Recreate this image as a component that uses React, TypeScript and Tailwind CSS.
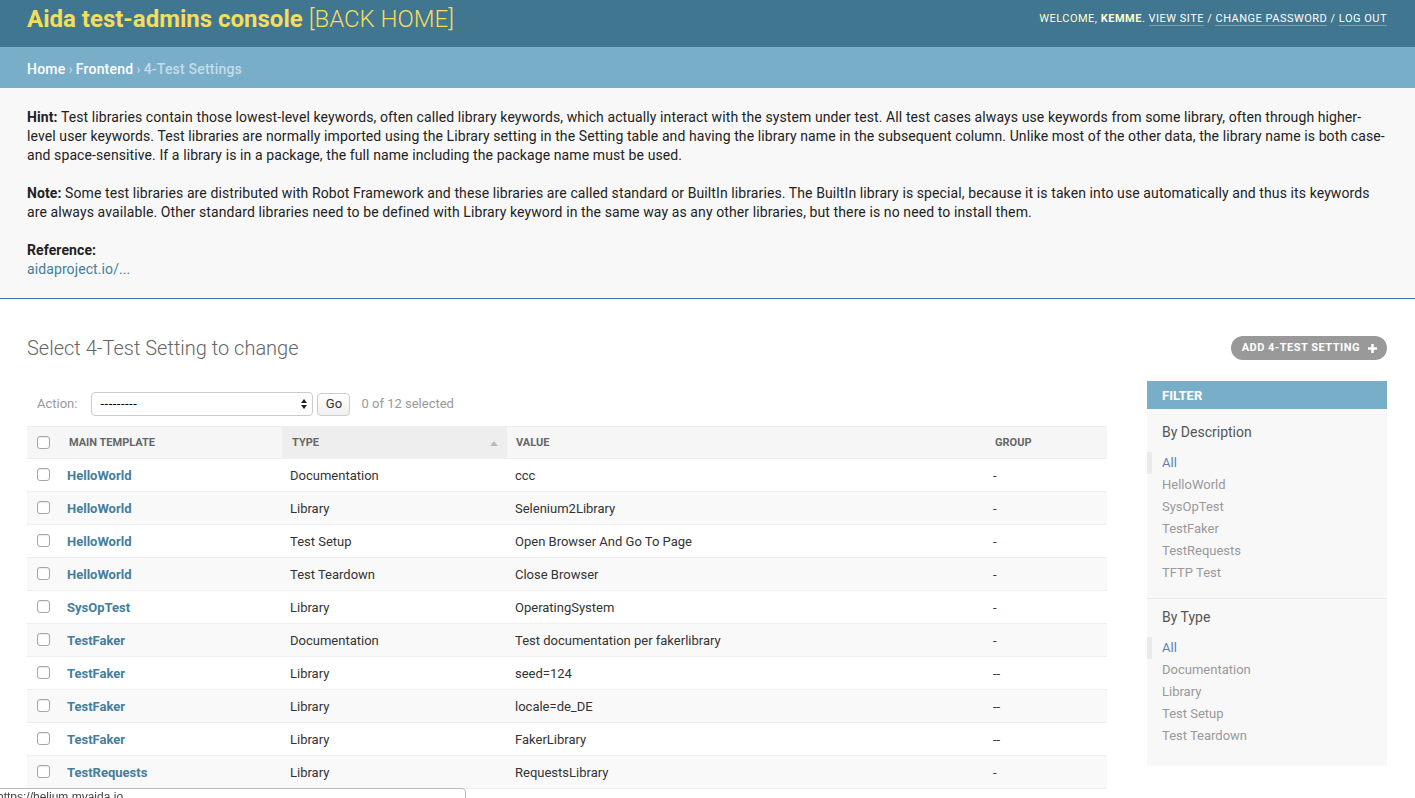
import React from "react";

const rows = [
  { tpl: "HelloWorld", type: "Documentation", value: "ccc", group: "-" },
  { tpl: "HelloWorld", type: "Library", value: "Selenium2Library", group: "-" },
  { tpl: "HelloWorld", type: "Test Setup", value: "Open Browser And Go To Page", group: "-" },
  { tpl: "HelloWorld", type: "Test Teardown", value: "Close Browser", group: "-" },
  { tpl: "SysOpTest", type: "Library", value: "OperatingSystem", group: "-" },
  { tpl: "TestFaker", type: "Documentation", value: "Test documentation per fakerlibrary", group: "-" },
  { tpl: "TestFaker", type: "Library", value: "seed=124", group: "--" },
  { tpl: "TestFaker", type: "Library", value: "locale=de_DE", group: "--" },
  { tpl: "TestFaker", type: "Library", value: "FakerLibrary", group: "--" },
  { tpl: "TestRequests", type: "Library", value: "RequestsLibrary", group: "-" },
];

const descFilters = ["All", "HelloWorld", "SysOpTest", "TestFaker", "TestRequests", "TFTP Test"];
const typeFilters = ["All", "Documentation", "Library", "Test Setup", "Test Teardown"];

function Checkbox() {
  return <span className="block w-[13px] h-[13px] rounded-[3px] border border-[#a6a6a6] bg-white shadow-[inset_0_1px_1px_rgba(0,0,0,0.08)]" />;
}

function FilterGroup({ title, items, last }: { title: string; items: string[]; last?: boolean }) {
  return (
    <div className={last ? "pb-[19px]" : "pb-[14px] border-b border-[#eaeaea]"}>
      <h3 className={`${last ? "mt-[8px]" : "mt-[13px]"} mb-[10px] px-[15px] text-[14px] leading-[20px] text-[#555]`}>{title}</h3>
      <ul>
        {items.map((it, i) => (
          <li
            key={it}
            className={`text-[13px] leading-[22px] ${i === 0 ? "border-l-[5px] border-[#eaeaea] pl-[10px] text-[#5b80b2]" : "pl-[15px] text-[#999]"}`}
          >
            {it}
          </li>
        ))}
      </ul>
    </div>
  );
}

export default function App() {
  return (
    <div className="min-h-screen bg-white text-[#333] font-['Roboto','Liberation_Sans',sans-serif]">
      {/* header */}
      <div className="h-[47px] bg-[#417690] pl-[27px] pr-[28px] flex justify-between items-start">
        <div className="pt-[6px] text-[24px] leading-[26px] text-[#f5dd5d]">
          <span className="font-bold">Aida test-admins console</span> <span className="font-light">[BACK HOME]</span>
        </div>
        <div className="pt-[12px] text-[11px] leading-[14px] uppercase tracking-[0.5px] text-[#ffc]">
          Welcome, <strong className="font-bold">kemme</strong>.{" "}
          <a className="text-white border-b border-white/30">View site</a> /{" "}
          <a className="text-white border-b border-white/30">Change password</a> /{" "}
          <a className="text-white border-b border-white/30">Log out</a>
        </div>
      </div>

      {/* breadcrumbs */}
      <div className="h-[41px] bg-[#79aec8] px-[27px] pt-[3px] flex items-center text-[14px] tracking-[0.2px] text-[#c4dce8]">
        <a className="text-white font-medium">Home</a>
        <span className="mx-[3px]">›</span>
        <a className="text-white font-medium">Frontend</a>
        <span className="mx-[3px]">›</span>
        <span className="font-medium">4-Test Settings</span>
      </div>

      {/* hint */}
      <div className="bg-[#f8f8f8] border-b border-[#417690] pl-[27px] pr-[27px] pt-[20px] pb-[19px] text-[14px] leading-[19px] tracking-[0.1px] text-[#222]">
        <p>
          <strong className="font-bold">Hint:</strong> Test libraries contain those lowest-level keywords, often called library keywords, which actually interact with the system under test. All test cases always use keywords from some library, often through higher-level user keywords. Test libraries are normally imported using the Library setting in the Setting table and having the library name in the subsequent column. Unlike most of the other data, the library name is both case- and space-sensitive. If a library is in a package, the full name including the package name must be used.
        </p>
        <p className="mt-[19px]">
          <strong className="font-bold">Note:</strong> Some test libraries are distributed with Robot Framework and these libraries are called standard or BuiltIn libraries. The BuiltIn library is special, because it is taken into use automatically and thus its keywords are always available. Other standard libraries need to be defined with Library keyword in the same way as any other libraries, but there is no need to install them.
        </p>
        <p className="mt-[19px]">
          <strong className="font-bold">Reference:</strong>
          <br />
          <a className="text-[#447e9b]">aidaproject.io/...</a>
        </p>
      </div>

      {/* content */}
      <div className="pl-[27px] pr-[28px] pt-[37px]">
        <div className="flex items-center justify-between">
          <h1 className="text-[20px] leading-[24px] font-light text-[#666]">Select 4-Test Setting to change</h1>
          <a className="h-[24px] rounded-full bg-[#999] pl-[11px] pr-[9px] flex items-center gap-[7px] text-[11px] font-bold uppercase tracking-[0.5px] text-white">
            Add 4-Test Setting
            <svg width="11" height="11" viewBox="0 0 11 11">
              <path d="M5.5 1v9M1 5.5h9" stroke="white" strokeWidth="2.6" />
            </svg>
          </a>
        </div>

        <div className="mt-[21px] flex gap-[40px] items-start">
          {/* changelist */}
          <div className="flex-1">
            <div className="pt-[11px] pb-[10px] pl-[10px] flex items-center h-[45px] text-[13px]">
              <span className="text-[#999]">Action:</span>
              <div className="ml-[14px] w-[222px] h-[24px] rounded-[4px] border border-[#ccc] bg-white flex items-center justify-between pl-[8px] pr-[4px] text-black">
                <span className="tracking-[0.5px]">---------</span>
                <svg width="8" height="12" viewBox="0 0 8 12">
                  <path d="M4 1L7 5H1z M4 11L7 7H1z" fill="#222" />
                </svg>
              </div>
              <button className="ml-[4px] w-[33px] h-[23px] rounded-[4px] border border-[#ccc] bg-gradient-to-b from-white to-[#f0f0f0] text-[13px] text-[#333]">Go</button>
              <span className="ml-[11px] text-[#999]">0 of 12 selected</span>
            </div>

            <table className="w-full table-fixed border-collapse text-[13px]">
              <colgroup>
                <col className="w-[32px]" />
                <col className="w-[223px]" />
                <col className="w-[225px]" />
                <col />
                <col className="w-[122px]" />
              </colgroup>
              <thead>
                <tr className="h-[32px] bg-[#f6f6f6] border-y border-[#eee] text-left text-[11px] font-bold uppercase text-[#666]">
                  <th className="pl-[10px]"><Checkbox /></th>
                  <th className="pl-[10px] pt-[2px]">Main template</th>
                  <th className="pl-[10px] pt-[2px] bg-[#eee]">
                    <div className="flex items-center justify-between pr-[9px]">
                      <span>Type</span>
                      <svg width="8" height="5" viewBox="0 0 8 5"><path d="M4 0L8 5H0z" fill="#bbb" /></svg>
                    </div>
                  </th>
                  <th className="pl-[9px] pt-[2px]">Value</th>
                  <th className="pl-[10px] pt-[2px]">Group</th>
                </tr>
              </thead>
              <tbody>
                {rows.map((r, i) => (
                  <tr key={i} className={`h-[33px] border-b border-[#eee] ${i % 2 === 1 ? "bg-[#f9f9f9]" : "bg-white"}`}>
                    <td className="pl-[10px] align-top pt-[9px]"><Checkbox /></td>
                    <td className="pl-[8px] pt-[2px]"><a className="font-bold text-[#447e9b]">{r.tpl}</a></td>
                    <td className="pl-[8px] pt-[2px]">{r.type}</td>
                    <td className="pl-[8px] pt-[2px]">{r.value}</td>
                    <td className="pl-[8px] pt-[2px]">{r.group}</td>
                  </tr>
                ))}
              </tbody>
            </table>
          </div>

          {/* filter */}
          <div className="w-[240px] bg-[#f8f8f8]">
            <h2 className="h-[28px] bg-[#79aec8] px-[15px] pt-[2px] flex items-center text-[13px] font-bold uppercase text-white">Filter</h2>
            <FilterGroup title="By Description" items={descFilters} />
            <FilterGroup title="By Type" items={typeFilters} last />
          </div>
        </div>
      </div>

      {/* browser status bar */}
      <div className="fixed left-[-1px] bottom-[-10px] w-[467px] h-[20px] bg-white border border-[#bbb] rounded-tr-[4px] overflow-hidden">
        <div className="-ml-[3px] pt-[1px] text-[12px] leading-[14px] text-[#444] font-['Liberation_Sans',sans-serif]">https://helium.myaida.io</div>
      </div>
    </div>
  );
}
